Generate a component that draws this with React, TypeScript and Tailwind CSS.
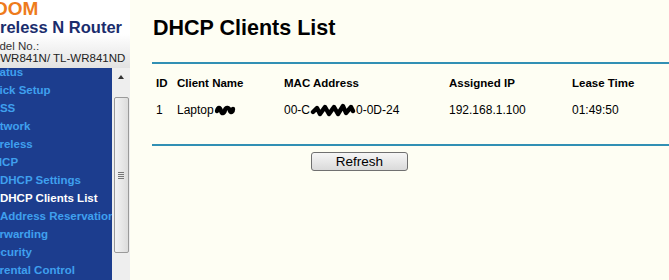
const menu = [
  { label: "Status", cls: "ml-[-12px]", active: false },
  { label: "Quick Setup", cls: "ml-[-16.5px]", active: false },
  { label: "QSS", cls: "ml-[-9px]", active: false },
  { label: "Network", cls: "ml-[-15px]", active: false },
  { label: "Wireless", cls: "ml-[-14.5px]", active: false },
  { label: "DHCP", cls: "ml-[-14.5px]", active: false },
  { label: "DHCP Settings", cls: "ml-0", active: false },
  { label: "DHCP Clients List", cls: "ml-0", active: true },
  { label: "Address Reservation", cls: "ml-0", active: false },
  { label: "Forwarding", cls: "ml-[-14.5px]", active: false },
  { label: "Security", cls: "ml-[-13.5px]", active: false },
  { label: "Parental Control", cls: "ml-[-14.5px]", active: false },
];

function Scribble({ w, d }: { w: number; d: string }) {
  return (
    <svg width={w} height="14" viewBox={`0 0 ${w} 14`} className="inline-block align-[-3px]">
      <path d={d} fill="none" stroke="#000" strokeWidth="4.4" strokeLinecap="round" strokeLinejoin="round" />
    </svg>
  );
}

export default function App() {
  return (
    <div className="flex h-[280px] w-[669px] overflow-hidden bg-[#fefef3] font-['Liberation_Sans',Arial,sans-serif] text-black">
      {/* left frame */}
      <div className="flex w-[130px] shrink-0 flex-col">
        <div className="h-[68px] shrink-0 overflow-hidden whitespace-nowrap bg-gradient-to-b from-white via-white to-[#e2e2e2]">
          <div className="ml-[-7px] mt-[-1px] text-[19px] font-bold leading-[19px] text-[#ee7b1c]">OOM</div>
          <div className="ml-[-20px] text-[16.5px] font-bold leading-[18px] text-[#1a2d6d]">Wireless N Router</div>
          <div className="ml-[-16.5px] mt-[4px] text-[11.5px] leading-[12px] text-[#333]">Model No.:</div>
          <div className="ml-[-17px] text-[11.5px] leading-[12px] text-[#222]">TL-WR841N/ TL-WR841ND</div>
        </div>
        <div className="flex min-h-0 flex-1">
          <div className="w-[112px] overflow-hidden bg-[#1c3d8e]">
            <ul className="mt-[-5px]">
              {menu.map((m) => (
                <li
                  key={m.label}
                  className={`h-[18px] whitespace-nowrap text-[11.5px] font-bold leading-[18px] ${m.active ? "text-white" : "text-[#3fa0ee]"}`}
                >
                  <span className={`block ${m.cls}`}>{m.label}</span>
                </li>
              ))}
            </ul>
          </div>
          <div className="flex w-[18px] flex-col items-center bg-[#eeeeee]">
            <div className="mt-[7px] h-0 w-0 border-x-[3.5px] border-b-[4px] border-x-transparent border-b-[#333]" />
            <div className="mt-[18px] flex h-[156px] w-[15px] items-center justify-center rounded-[2px] border border-[#9a9a9a] bg-gradient-to-r from-[#f4f4f4] to-[#dcdcdc]">
              <div className="flex flex-col gap-[1px]">
                <div className="h-px w-[6px] bg-[#777]" />
                <div className="h-px w-[6px] bg-[#777]" />
                <div className="h-px w-[6px] bg-[#777]" />
                <div className="h-px w-[6px] bg-[#777]" />
              </div>
            </div>
          </div>
        </div>
      </div>

      {/* main frame */}
      <main className="flex-1 pl-[22px]">
        <h1 className="ml-[1px] pt-[16px] text-[21.5px] font-bold leading-[24px]">DHCP Clients List</h1>
        <div className="mt-[22px] h-[2px] bg-[#3190b4]" />

        <div className="mt-[12px] grid h-[14px] grid-cols-[21px_107px_165px_123px_1fr] pl-[4px] text-[11.5px] font-bold leading-[14px]">
          <span>ID</span>
          <span>Client Name</span>
          <span>MAC Address</span>
          <span>Assigned IP</span>
          <span>Lease Time</span>
        </div>
        <div className="mt-[13px] grid h-[14px] grid-cols-[21px_107px_165px_123px_1fr] pl-[4px] text-[12px] leading-[14px] whitespace-nowrap">
          <span>1</span>
          <span>
            Laptop
            <Scribble w={22} d="M3,8 C4,4 6,4 7,8 C8,11 10,11 11,7 C12,4 15,4 16,8 C17,10 19,9 19,6" />
          </span>
          <span>
            00-C
            <Scribble w={46} d="M3,9 L7,5 L10,11 L15,4 L19,11 L24,4 L28,11 L33,3 L36,10 L41,4 L43,8" />
            0-0D-24
          </span>
          <span>192.168.1.100</span>
          <span>01:49:50</span>
        </div>
        <div className="mt-[27px] h-[2px] bg-[#3190b4]" />

        <button className="ml-[159px] mt-[6px] h-[19px] w-[97px] rounded-[3px] border border-[#707070] bg-gradient-to-b from-[#f6f6f6] to-[#dadada] text-[13.5px] leading-[17px] text-black">
          Refresh
        </button>
      </main>
    </div>
  );
}
